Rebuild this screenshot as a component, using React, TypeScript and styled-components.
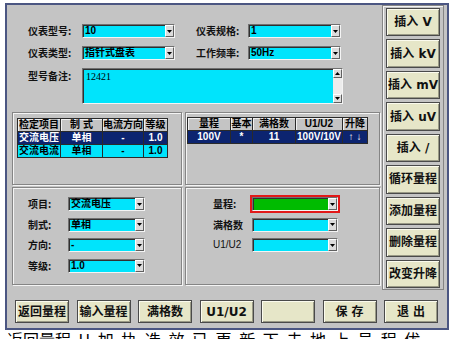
import React from 'react';
import styled, { createGlobalStyle } from 'styled-components';

const CJK = `"Noto Sans CJK SC", sans-serif`;
const LATIN_CJK = `"DejaVu Sans", "Noto Sans CJK SC", sans-serif`;
const VALUE_FONT = `"Liberation Sans", "Noto Sans CJK SC", sans-serif`;

const GRAY = '#c4c4c4';
const CYAN = '#00e4fc';
const NAVY = '#0c2470';
const FACE = '#e6e6c8';
const GREEN = '#00bb00';

const GlobalStyle = createGlobalStyle`
  html, body { margin: 0; padding: 0; background: #fff; }
  body { width: 454px; height: 339px; overflow: hidden; font-family: ${CJK}; }
`;

const Page = styled.div`
  padding: 3px 0 0 5px;
`;

const Window = styled.div`
  width: 444px;
  height: 327px;
  box-sizing: border-box;
  background: ${GRAY};
  border: 2px solid #4b5682;
  display: grid;
  grid-template-columns: 375px 62px;
  grid-template-rows: 285px 1fr;
`;

const MainPanel = styled.div`
  display: flex;
  flex-direction: column;
  padding: 19px 0 0 5px;
`;

const TopForm = styled.div`
  display: grid;
  grid-template-columns: 54px 93px 73px 93px;
  grid-template-rows: 14px 14px 36px;
  row-gap: 8px;
  padding-left: 16px;
`;

const Label = styled.div<{ $indent?: number; $top?: boolean }>`
  font: bold 10px/14px ${CJK};
  color: #111;
  white-space: nowrap;
  padding-left: ${p => p.$indent ?? 0}px;
  align-self: ${p => (p.$top ? 'start' : 'center')};
  padding-top: ${p => (p.$top ? 1 : 0)}px;
`;

const LatinLabel = styled(Label)`
  font: 10px/14px ${VALUE_FONT};
`;

const SelectBox = styled.div<{ $bg?: string; $alert?: boolean }>`
  display: flex;
  height: 14px;
  box-sizing: border-box;
  background: ${p => p.$bg ?? CYAN};
  border: 1px solid;
  border-color: #707070 #f4f4f4 #f4f4f4 #707070;
  box-shadow: inset 1px 1px 0 #303030;
  outline: ${p => (p.$alert ? '2px solid #e21818' : 'none')};
`;

const SelectValue = styled.span`
  flex: 1;
  padding-left: 2px;
  font: bold 10px/12px ${VALUE_FONT};
  color: #000;
  white-space: nowrap;
  overflow: hidden;
`;

const ArrowBtn = styled.span`
  width: 9px;
  flex: none;
  box-sizing: border-box;
  background: #dcdcdc;
  border: 1px solid;
  border-color: #ffffff #606060 #606060 #ffffff;
  display: flex;
  align-items: center;
  justify-content: center;
`;

const TextArea = styled.div`
  grid-column: 2 / 5;
  display: flex;
  width: 261px;
  box-sizing: border-box;
  background: ${CYAN};
  border: 1px solid;
  border-color: #707070 #f4f4f4 #f4f4f4 #707070;
  box-shadow: inset 1px 1px 0 #303030;
`;

const AreaText = styled.div`
  flex: 1;
  padding: 2px 3px;
  font: 10px/12px "Liberation Serif", serif;
  color: #000;
`;

const ScrollBar = styled.div`
  width: 9px;
  flex: none;
  display: flex;
  flex-direction: column;
  justify-content: space-between;
  background: #ececec;
`;

const Panels = styled.div`
  margin-top: 8px;
  display: grid;
  grid-template-columns: 170px 195px;
  grid-template-rows: 73px 98px;
  column-gap: 3px;
  row-gap: 2px;
`;

const Groove = styled.div<{ $padT: number; $padL: number }>`
  box-sizing: border-box;
  border: 1px solid #858585;
  box-shadow: 1px 1px 0 #f4f4f4, inset 1px 1px 0 #f4f4f4;
  padding: ${p => p.$padT}px 0 0 ${p => p.$padL}px;
`;

const Table = styled.div<{ $cols: string }>`
  display: grid;
  grid-template-columns: ${p => p.$cols};
  grid-auto-rows: 13px;
  width: max-content;
  border-left: 1px solid #2a2a2a;
  border-top: 1px solid #2a2a2a;
`;

const Cell = styled.div<{ $kind: 'head' | 'sel' | 'alt' }>`
  box-sizing: border-box;
  border-right: 1px solid #2a2a2a;
  border-bottom: 1px solid #2a2a2a;
  background: ${p => (p.$kind === 'head' ? GRAY : p.$kind === 'sel' ? NAVY : CYAN)};
  color: ${p => (p.$kind === 'sel' ? '#fff' : '#000')};
  box-shadow: ${p => (p.$kind === 'head' ? 'inset 1px 1px 0 #f0f0f0' : 'none')};
  font: bold 10px/12px ${VALUE_FONT};
  text-align: center;
  white-space: nowrap;
  overflow: hidden;
  display: flex;
  justify-content: center;
`;

const FormGrid = styled.div<{ $labelW: number; $selW: number }>`
  display: grid;
  grid-template-columns: ${p => p.$labelW}px ${p => p.$selW}px;
  grid-auto-rows: 14px;
  row-gap: 6.5px;
`;

const SideColumn = styled.div`
  box-sizing: border-box;
  border: 1px solid #858585;
  box-shadow: inset 1px 1px 0 #f4f4f4;
  padding: 2px 3px 1px;
  display: grid;
  grid-template-rows: repeat(9, 1fr);
  row-gap: 3px;
`;

const FaceButton = styled.button`
  box-sizing: border-box;
  margin: 0;
  padding: 0;
  background: ${FACE};
  border: 1px solid #4a4a4a;
  box-shadow: inset 1px 1px 0 #fbfbee, inset -1px -1px 0 #9a9a86;
  color: #111;
  font: bold 12px/14px ${LATIN_CJK};
  white-space: nowrap;
  cursor: default;
`;

const BottomBar = styled.div`
  grid-column: 1 / 3;
  display: grid;
  grid-template-columns: repeat(7, 54px);
  column-gap: 7.5px;
  grid-template-rows: 23px;
  padding: 10px 0 0 8px;
`;

const Caption = styled.div`
  font: 16px/18px ${CJK};
  color: #000;
  white-space: pre;
  word-spacing: 4px;
  padding-left: 2px;
  overflow: hidden;
  width: 444px;
`;

const DownTri = () => (
  <svg width="5" height="3" viewBox="0 0 5 3">
    <path d="M0 0h5L2.5 3z" fill="#000" />
  </svg>
);

const UpTri = () => (
  <svg width="5" height="3" viewBox="0 0 5 3">
    <path d="M0 3h5L2.5 0z" fill="#000" />
  </svg>
);

const ScrollBtn = styled(ArrowBtn)`
  width: 9px;
  height: 9px;
`;

const Select = ({ value, bg, alert }: { value: string; bg?: string; alert?: boolean }) => (
  <SelectBox $bg={bg} $alert={alert}>
    <SelectValue>{value}</SelectValue>
    <ArrowBtn>
      <DownTri />
    </ArrowBtn>
  </SelectBox>
);

type Row = { kind: 'head' | 'sel' | 'alt'; cells: string[] };

const leftRows: Row[] = [
  { kind: 'head', cells: ['检定项目', '制 式', '电流方向', '等级'] },
  { kind: 'sel', cells: ['交流电压', '单相', '-', '1.0'] },
  { kind: 'alt', cells: ['交流电流', '单相', '-', '1.0'] },
];

const rightRows: Row[] = [
  { kind: 'head', cells: ['量程', '基本', '满格数', 'U1/U2', '升降'] },
  { kind: 'sel', cells: ['100V', '*', '11', '100V/10V', '↑ ↓'] },
];

const DataTable = ({ cols, rows }: { cols: string; rows: Row[] }) => (
  <Table $cols={cols}>
    {rows.map((r, i) =>
      r.cells.map((c, j) => (
        <Cell key={`${i}-${j}`} $kind={r.kind}>
          {c}
        </Cell>
      ))
    )}
  </Table>
);

const sideButtons: [string, string][] = [
  ['插入 ', 'V'],
  ['插入 ', 'kV'],
  ['插入 ', 'mV'],
  ['插入 ', 'uV'],
  ['插入 ', '/'],
  ['循环量程', ''],
  ['添加量程', ''],
  ['删除量程', ''],
  ['改变升降', ''],
];

const bottomButtons = ['返回量程', '输入量程', '满格数', 'U1/U2', '', '保 存', '退 出'];

export default function App() {
  return (
    <>
      <GlobalStyle />
      <Page>
        <Window>
          <MainPanel>
            <TopForm>
              <Label>仪表型号:</Label>
              <Select value="10" />
              <Label $indent={21}>仪表规格:</Label>
              <Select value="1" />
              <Label>仪表类型:</Label>
              <Select value="指针式盘表" />
              <Label $indent={21}>工作频率:</Label>
              <Select value="50Hz" />
              <Label $top>型号备注:</Label>
              <TextArea>
                <AreaText>12421</AreaText>
                <ScrollBar>
                  <ScrollBtn>
                    <UpTri />
                  </ScrollBtn>
                  <ScrollBtn>
                    <DownTri />
                  </ScrollBtn>
                </ScrollBar>
              </TextArea>
            </TopForm>
            <Panels>
              <Groove $padT={5} $padL={4}>
                <DataTable cols="43px 42px 41px 24px" rows={leftRows} />
              </Groove>
              <Groove $padT={4} $padL={1}>
                <DataTable cols="43px 22px 43px 47px 25px" rows={rightRows} />
              </Groove>
              <Groove $padT={9} $padL={15}>
                <FormGrid $labelW={40} $selW={77}>
                  <Label>项目:</Label>
                  <Select value="交流电压" />
                  <Label>制式:</Label>
                  <Select value="单相" />
                  <Label>方向:</Label>
                  <Select value="-" />
                  <Label>等级:</Label>
                  <Select value="1.0" />
                </FormGrid>
              </Groove>
              <Groove $padT={9} $padL={27}>
                <FormGrid $labelW={39} $selW={86}>
                  <Label>量程:</Label>
                  <Select value="" bg={GREEN} alert />
                  <Label>满格数</Label>
                  <Select value="" />
                  <LatinLabel>U1/U2</LatinLabel>
                  <Select value="" />
                </FormGrid>
              </Groove>
            </Panels>
          </MainPanel>
          <SideColumn>
            {sideButtons.map(([cn, latin], i) => (
              <FaceButton key={i}>
                {cn}
                {latin}
              </FaceButton>
            ))}
          </SideColumn>
          <BottomBar>
            {bottomButtons.map((t, i) => (
              <FaceButton key={i}>{t}</FaceButton>
            ))}
          </BottomBar>
        </Window>
        <Caption>返回量程 U 加 执 选 效 已 更 新 下 去 地 上 号 程 优</Caption>
      </Page>
    </>
  );
}
